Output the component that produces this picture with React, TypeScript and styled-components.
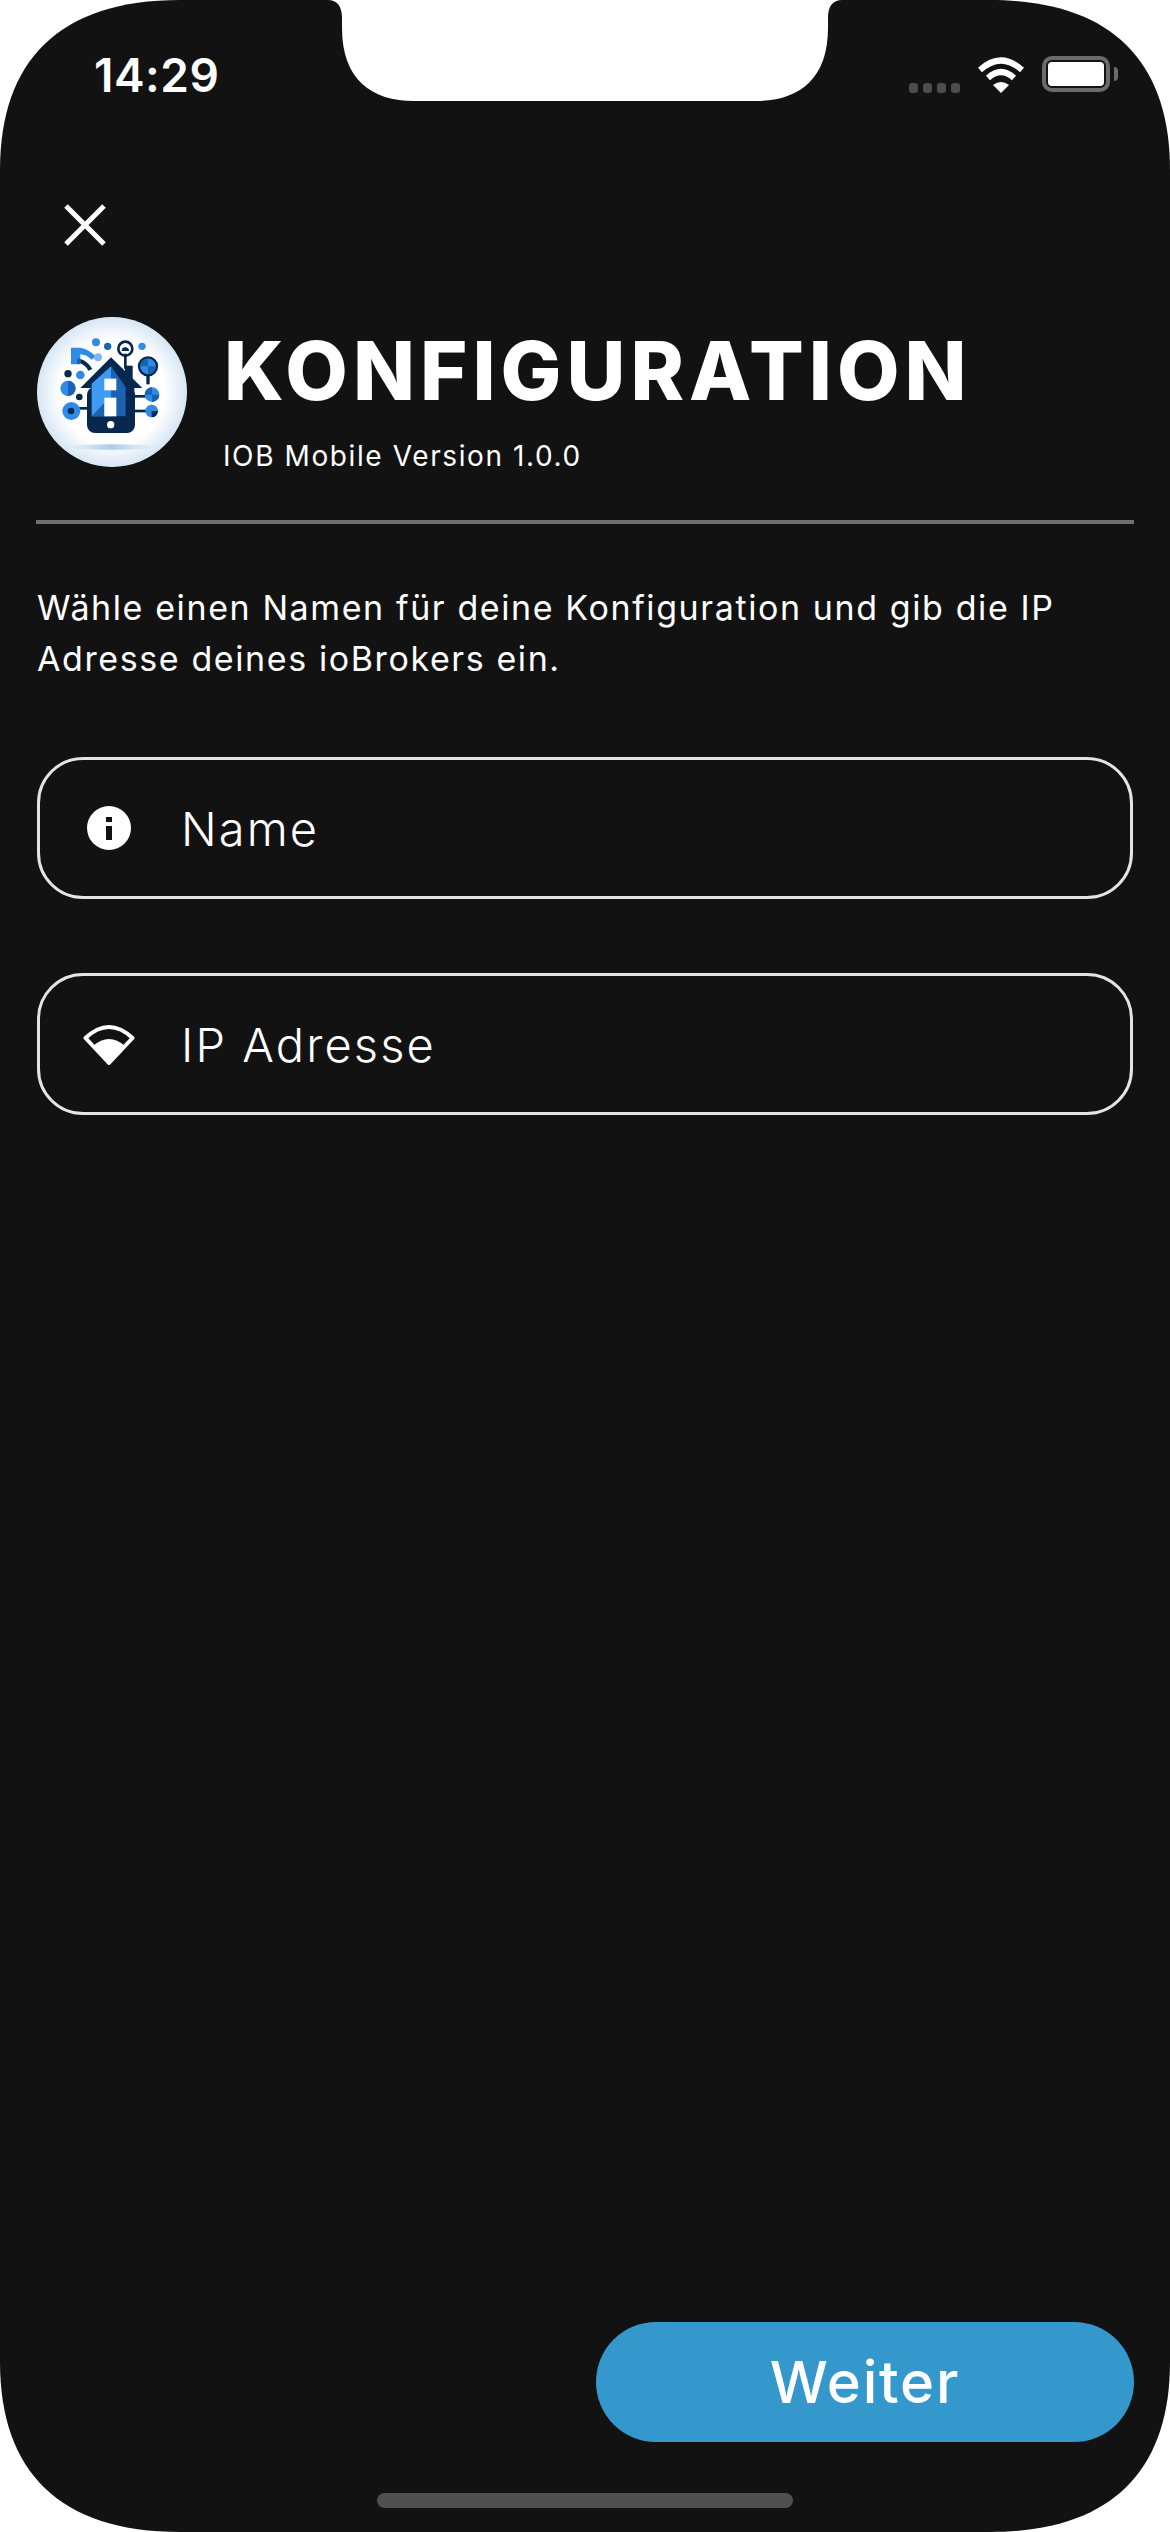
import styled, { createGlobalStyle } from "styled-components";

const GlobalStyle = createGlobalStyle`
  html, body {
    margin: 0;
    padding: 0;
    background: #fff;
  }
  * {
    box-sizing: border-box;
  }
`;

const Screen = styled.div`
  position: relative;
  display: flex;
  flex-direction: column;
  width: 1170px;
  height: 2532px;
  overflow: hidden;
  background: #121212;
  clip-path: path("M0 170C0 60 60 0 180 0H990C1110 0 1170 60 1170 170V2362C1170 2472 1110 2532 990 2532H180C60 2532 0 2472 0 2362Z");
  color: #fff;
  font-family: Inter, "Liberation Sans", sans-serif;
`;

const Notch = styled.svg`
  position: absolute;
  top: 0;
  left: 322px;
  width: 526px;
  height: 101px;
`;

const StatusBar = styled.div`
  display: flex;
  align-items: flex-start;
  justify-content: space-between;
  height: 203px;
  padding: 50px 60px 0 94px;
`;

const Clock = styled.div`
  font-size: 46px;
  font-weight: 600;
  line-height: 50px;
  letter-spacing: 0.5px;
`;

const StatusIcons = styled.div`
  display: flex;
  align-items: flex-end;
  height: 43px;
  padding-top: 6px;
`;

const SignalDots = styled.div`
  display: flex;
  gap: 5px;
  margin: 0 17px 0 0;
`;

const SignalDot = styled.span`
  width: 9px;
  height: 10px;
  border-radius: 3px;
  background: #4d4d4d;
`;

const Battery = styled.div`
  position: relative;
  width: 68px;
  height: 36px;
  margin: 0 0 1px 17px;
  padding: 2px;
  border: 4px solid #6b6b6b;
  border-radius: 10px;
`;

const BatteryFill = styled.div`
  width: 100%;
  height: 100%;
  border-radius: 4px;
  background: #fff;
`;

const BatteryTip = styled.span`
  position: absolute;
  top: 7px;
  right: -12px;
  width: 4px;
  height: 14px;
  border-radius: 0 5px 5px 0;
  background: #6b6b6b;
`;

const CloseButton = styled.button`
  display: block;
  width: 44px;
  height: 44px;
  margin: 0 0 70px 63px;
  padding: 0;
  border: 0;
  background: none;
`;

const Header = styled.header`
  display: flex;
  align-items: flex-start;
  gap: 37px;
  padding: 0 37px;
`;

const Logo = styled.svg`
  flex: none;
  width: 150px;
  height: 150px;
`;

const HeaderText = styled.div`
  display: flex;
  flex-direction: column;
`;

const Title = styled.h1`
  margin: 0;
  font-size: 81px;
  font-weight: 800;
  line-height: 108px;
  letter-spacing: 5px;
`;

const Version = styled.div`
  margin: 16px 0 0 -1px;
  font-size: 28px;
  line-height: 30px;
  letter-spacing: 1.6px;
`;

const Divider = styled.hr`
  height: 4px;
  margin: 49px 36px 0;
  border: 0;
  background: #6f6f6f;
`;

const Intro = styled.p`
  margin: 58px 37px 0;
  font-size: 34px;
  line-height: 51px;
  letter-spacing: 1.6px;
`;

const Fields = styled.div`
  display: flex;
  flex-direction: column;
  gap: 74px;
  padding: 73px 37px 0;
`;

const Field = styled.div`
  display: flex;
  align-items: center;
  height: 142px;
  padding-left: 43px;
  border: 3px solid #e4e4e4;
  border-radius: 46px;
`;

const FieldIcon = styled.svg`
  flex: none;
  width: 52px;
  height: 52px;
`;

const FieldLabel = styled.span`
  margin-left: 46px;
  font-size: 47px;
  font-weight: 350;
  letter-spacing: 2.1px;
`;

const Footer = styled.div`
  display: flex;
  justify-content: flex-end;
  margin-top: auto;
  padding: 0 36px;
`;

const NextButton = styled.button`
  width: 538px;
  height: 120px;
  padding: 0;
  border: 0;
  border-radius: 60px;
  background: #3498cd;
  color: #fff;
  font-family: inherit;
  font-size: 58px;
  font-weight: 450;
  letter-spacing: 1.8px;
`;

const HomeBar = styled.div`
  flex: none;
  width: 416px;
  height: 15px;
  margin: 51px auto 24px;
  border-radius: 8px;
  background: #505050;
`;

const navy = "#06284f";
const blue = "#2f8be6";
const deep = "#1b62b0";

const LogoMark = () => (
  <Logo viewBox="108 80 450 450">
    <defs>
      <radialGradient id="disc" cx="50%" cy="50%" r="50%">
        <stop offset="0.7" stopColor="#ffffff" />
        <stop offset="1" stopColor="#d6e6f4" />
      </radialGradient>
      <linearGradient id="shade" x1="0" x2="1">
        <stop offset="0" stopColor="#b5d2ea" stopOpacity="0" />
        <stop offset="0.5" stopColor="#a9cbe6" />
        <stop offset="1" stopColor="#b5d2ea" stopOpacity="0" />
      </linearGradient>
    </defs>
    <circle cx="333" cy="305" r="225" fill="url(#disc)" />
    <ellipse cx="330" cy="470" rx="135" ry="8" fill="url(#shade)" />
    <path d="M210 172h28c20 4 34 14 46 26l-12 10c-12-10-18-14-34-16v30h-28z" fill={blue} />
    <path d="M228 205h10v16h-10z" fill={deep} />
    <path d="M238 206c14 4 26 14 36 30l-12 5c-6-12-14-18-24-22z" fill={navy} />
    <circle cx="291" cy="201" r="12" fill="#7db8f0" />
    <circle cx="285" cy="156" r="12" fill={blue} />
    <circle cx="320" cy="168" r="11" fill={deep} />
    <circle cx="423" cy="168" r="11" fill={blue} />
    <circle cx="373" cy="175" r="21" fill="#fff" stroke={navy} strokeWidth="8" />
    <path d="M362 182a11 11 0 0 1 22 0z" fill={navy} />
    <rect x="369" y="190" width="8" height="45" fill={navy} />
    <rect x="372" y="226" width="23" height="50" fill={navy} />
    <circle cx="441" cy="228" r="27" fill={blue} stroke={navy} strokeWidth="7" />
    <path d="M441 228h24a24 24 0 0 1-24 24zM417 228a24 24 0 0 1 24-24v24z" fill={deep} />
    <rect x="436" y="254" width="10" height="28" fill={navy} />
    <circle cx="201" cy="250" r="11" fill={navy} />
    <circle cx="238" cy="254" r="13" fill={blue} />
    <circle cx="201" cy="294" r="23" fill={blue} />
    <path d="M201 294h23a23 23 0 0 1-23 23zM201 294v-23a23 23 0 0 1 23 23z" fill={deep} />
    <circle cx="235" cy="320" r="10" fill={navy} />
    <rect x="230" y="350" width="32" height="8" fill={navy} />
    <circle cx="211" cy="362" r="27" fill={blue} />
    <circle cx="210" cy="362" r="10" fill={navy} />
    <rect x="400" y="314" width="36" height="8" fill={navy} />
    <rect x="400" y="358" width="36" height="8" fill={navy} />
    <circle cx="453" cy="313" r="22" fill={blue} />
    <path d="M453 313h22a22 22 0 0 1-22 22zM431 313a22 22 0 0 1 22-22v22z" fill={deep} />
    <circle cx="452" cy="362" r="19" fill={blue} />
    <path d="M452 362h19a19 19 0 0 1-19 19z" fill={navy} />
    <rect x="258" y="290" width="144" height="138" rx="24" fill={navy} />
    <path d="M238 293l92-92 94 92h-24v85H272v-85z" fill={navy} />
    <path d="M272 378V280l58-52v150z" fill="#3f9bf2" />
    <path d="M272 378l38-40v40z" fill={deep} />
    <path d="M330 228l44 62v88h-44z" fill={deep} />
    <rect x="310" y="265" width="36" height="35" fill="#fff" />
    <rect x="310" y="322" width="36" height="56" fill="#fff" />
    <circle cx="329" cy="403" r="11" fill="#fff" />
  </Logo>
);

const App = () => (
  <Screen>
    <GlobalStyle />
    <Notch viewBox="0 0 526 101">
      <path
        d="M6 0H520C511 0 506 6 506 18V28C506 80 476 101 434 101H92C50 101 20 80 20 28V18C20 6 15 0 6 0Z"
        fill="#fff"
      />
    </Notch>
    <StatusBar>
      <Clock>14:29</Clock>
      <StatusIcons>
        <SignalDots>
          <SignalDot />
          <SignalDot />
          <SignalDot />
          <SignalDot />
        </SignalDots>
        <svg width="48" height="36" viewBox="0 0 48 36">
          <path d="M3 13Q24 -6 45 13" fill="none" stroke="#fff" strokeWidth="6" />
          <path d="M11 21Q24 9 37 21" fill="none" stroke="#fff" strokeWidth="6" />
          <path d="M16 28Q24 22 32 28L24 36Z" fill="#fff" />
        </svg>
        <Battery>
          <BatteryFill />
          <BatteryTip />
        </Battery>
      </StatusIcons>
    </StatusBar>
    <CloseButton aria-label="close">
      <svg width="44" height="44" viewBox="0 0 44 44">
        <path d="M3 3L41 41M41 3L3 41" stroke="#fff" strokeWidth="5" />
      </svg>
    </CloseButton>
    <Header>
      <LogoMark />
      <HeaderText>
        <Title>KONFIGURATION</Title>
        <Version>IOB Mobile Version 1.0.0</Version>
      </HeaderText>
    </Header>
    <Divider />
    <Intro>
      Wähle einen Namen für deine Konfiguration und gib die IP
      <br />
      Adresse deines ioBrokers ein.
    </Intro>
    <Fields>
      <Field>
        <FieldIcon viewBox="0 0 52 52">
          <circle cx="26" cy="26" r="22" fill="#fff" />
          <rect x="23" y="24" width="6" height="14" fill="#121212" />
          <rect x="23" y="15" width="6" height="5" fill="#121212" />
        </FieldIcon>
        <FieldLabel>Name</FieldLabel>
      </Field>
      <Field>
        <FieldIcon viewBox="0 0 52 52">
          <path d="M2.5 20Q26 -2 49.5 20L26 45Z" fill="none" stroke="#fff" strokeWidth="4" strokeLinejoin="round" />
          <path d="M10 28Q26 14 42 28L26 45Z" fill="#fff" />
        </FieldIcon>
        <FieldLabel>IP Adresse</FieldLabel>
      </Field>
    </Fields>
    <Footer>
      <NextButton>Weiter</NextButton>
    </Footer>
    <HomeBar />
  </Screen>
);

export default App;
